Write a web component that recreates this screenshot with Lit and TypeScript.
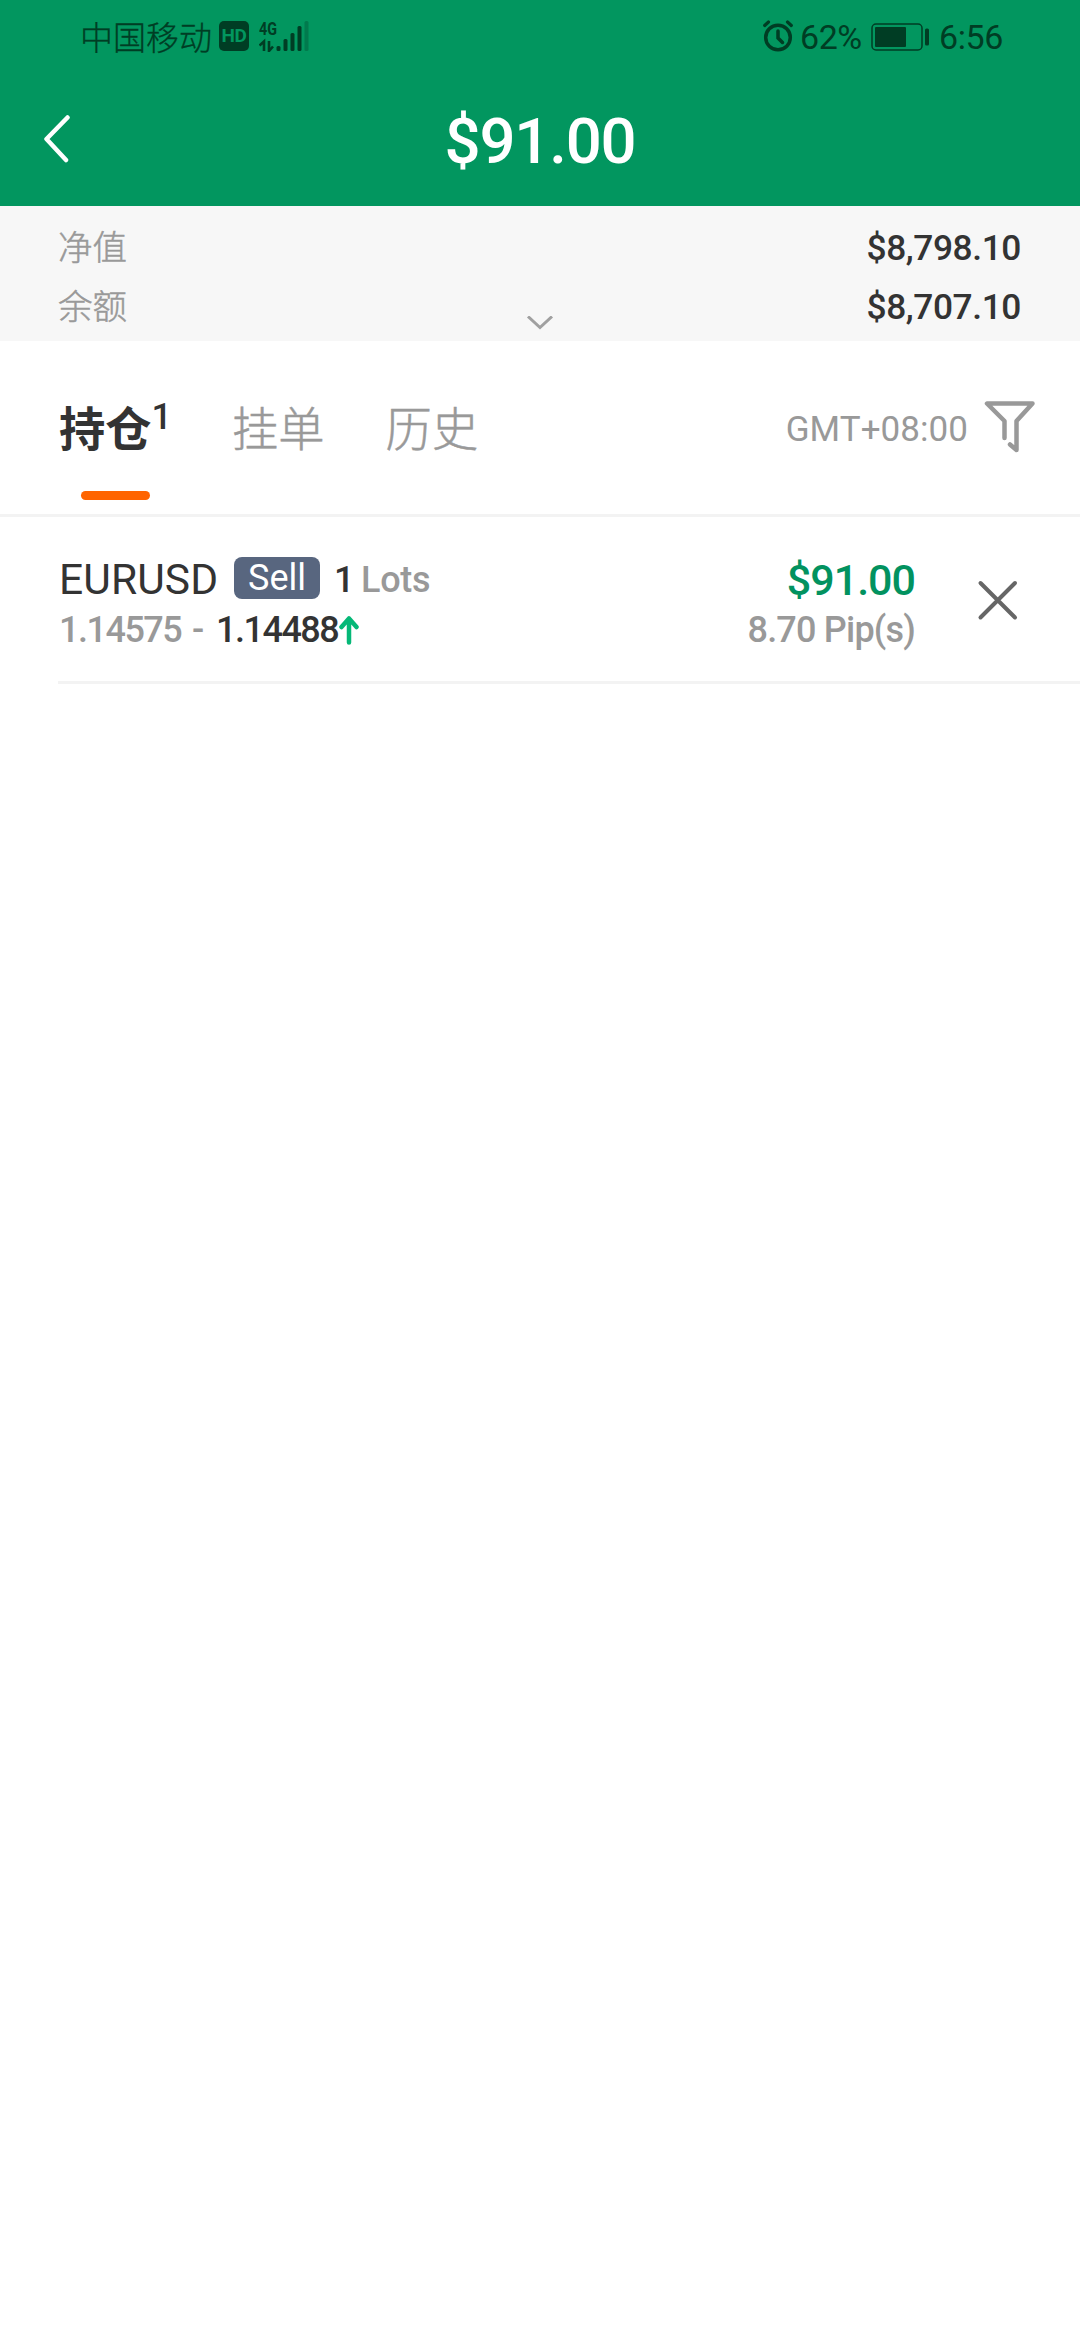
import { LitElement, html, css } from "lit";
import { customElement, property } from "lit/decorators.js";

const fontStack = css`Roboto, "Noto Sans CJK SC", sans-serif`;

@customElement("status-bar")
class StatusBar extends LitElement {
  static styles = css`
    :host { display: flex; align-items: center; justify-content: space-between; height: 70px; box-sizing: border-box;
      padding: 4px 77px 0 80px; color: #003d24; font: 300 33px/50px ${fontStack}; }
    .side { display: flex; align-items: center; height: 50px; }
    .carrier { white-space: nowrap; padding-top: 3px; -webkit-text-stroke: 0.3px #003d24; }
    .hd { display: flex; align-items: center; justify-content: center; width: 30px; height: 30px; margin: 0 10px 3px 7px;
      border-radius: 5px; background: #003d24; color: #02965f; font: 700 19px/30px ${fontStack}; letter-spacing: -0.5px; }
    svg { display: block; flex: none; }
    .signal { margin-bottom: 3px; }
    .g { font: 700 18px ${fontStack}; }
    .alarm { margin: 0 7px 2px 0; }
    .num { font-size: 34px; font-weight: 400; }
    .pct { width: 71px; letter-spacing: -0.5px; }
    .battery { margin-bottom: 1px; }
    .time { margin-left: 9px; letter-spacing: -0.4px; }
  `;
  render() {
    return html`
      <div class="side">
        <span class="carrier">中国移动</span>
        <span class="hd">HD</span>
        <svg class="signal" width="52" height="32" viewBox="0 0 52 32">
          <text class="g" x="0" y="14.500" fill="#003d24" textLength="18" lengthAdjust="spacingAndGlyphs">4G</text>
          <path d="M0.500 25.500 L5 21.500 V31 M10 21 V31 L14 26.500" fill="none" stroke="#003d24" stroke-width="2.600"/>
          <g fill="#003d24">
            <rect x="17.500" y="26" width="4" height="5" rx="1.500"/>
            <rect x="24.500" y="19" width="4" height="12" rx="1.500"/>
            <rect x="31.500" y="13" width="4" height="18" rx="1.500"/>
            <rect x="38.500" y="6" width="4" height="25" rx="1.500"/>
            <rect x="45.500" y="1" width="4" height="30" rx="1.500" opacity="0.300"/>
          </g>
        </svg>
      </div>
      <div class="side">
        <svg class="alarm" width="30" height="32" viewBox="0 0 30 32" fill="none" stroke="#003d24" stroke-linecap="round">
          <circle cx="15" cy="17.500" r="12.300" stroke-width="3.500"/>
          <path d="M15 11 V18 L19.500 22.500" stroke-width="3.500"/>
          <path d="M1.700 5.500 L5.500 2 M28.300 5.500 L24.500 2" stroke-width="3.200"/>
        </svg>
        <span class="num pct">62%</span>
        <svg class="battery" width="59" height="28" viewBox="0 0 59 28">
          <rect x="1" y="1" width="50" height="26" rx="4" fill="none" stroke="#003d24" stroke-width="1.500"/>
          <rect x="4" y="4" width="31" height="20" rx="1" fill="#003d24"/>
          <rect x="54" y="5.500" width="4" height="17" rx="1.500" fill="#003d24"/>
        </svg>
        <span class="num time">6:56</span>
      </div>`;
  }
}

@customElement("account-summary")
class AccountSummary extends LitElement {
  @property({ attribute: false }) rows: { label: string; value: string }[] = [];
  static styles = css`
    :host { display: block; position: relative; box-sizing: border-box; height: 135px; padding: 12.5px 59px 0 58px;
      background: #f7f7f7; font-family: ${fontStack}; }
    .row { display: flex; justify-content: space-between; height: 59px; line-height: 59px; font-size: 34.5px; color: #999; }
    .label { font-weight: 300; -webkit-text-stroke: 0.5px #999; }
    .value { font-size: 35.3px; font-weight: 500; color: #333; letter-spacing: -0.4px; }
    .toggle { position: absolute; left: 526px; top: 110px; display: block; }
  `;
  render() {
    return html`
      ${this.rows.map((r) => html`<div class="row"><span class="label">${r.label}</span><span class="value">${r.value}</span></div>`)}
      <svg class="toggle" width="28" height="14" viewBox="0 0 28 14"><path d="M2 0.500 L14 11.500 L26 0.500" fill="none" stroke="#a0a0a0" stroke-width="3"/></svg>`;
  }
}

@customElement("order-tabs")
class OrderTabs extends LitElement {
  static styles = css`
    :host { display: flex; align-items: center; box-sizing: border-box; height: 176px; padding: 5px 44px 0 59px;
      border-bottom: 3px solid #f3f3f3; font-family: ${fontStack}; color: #999; }
    .tabs { display: flex; flex: 1; gap: 61px; height: 100%; align-items: center; }
    .tab { position: relative; display: flex; height: 100%; align-items: center; white-space: nowrap;
      font-size: 46.3px; line-height: 60px; font-weight: 300; -webkit-text-stroke: 0.5px #999; }
    .active { color: #333; font-weight: 700; width: 112px; -webkit-text-stroke: 0; }
    .count { font-size: 36px; font-weight: 500; line-height: 40px; margin: 0 0 27px 0; }
    .bar { position: absolute; left: 22px; bottom: 14px; width: 69px; height: 9px; border-radius: 5px; background: #ff6400; }
    .zone { font-size: 35px; line-height: 50px; margin-right: 16px; letter-spacing: 0.05px; }
    svg { display: block; margin-bottom: 7px; }
  `;
  render() {
    return html`
      <div class="tabs">
        <div class="tab active"><span>持仓</span><span class="count">1</span><i class="bar"></i></div>
        <div class="tab">挂单</div>
        <div class="tab">历史</div>
      </div>
      <span class="zone">GMT+08:00</span>
      <svg width="52" height="54" viewBox="0 0 52 54" fill="none" stroke="#999" stroke-width="4.500" stroke-linecap="round" stroke-linejoin="round">
        <path d="M20.500 38 V21 L3 3.500 H48.500 L32.500 21 V50 L26 44.500"/>
      </svg>`;
  }
}

@customElement("position-row")
class PositionRow extends LitElement {
  static styles = css`
    :host { display: flex; box-sizing: border-box; height: 167px; margin-left: 58px; padding: 38px 60px 0 1px;
      border-bottom: 3px solid #f3f3f3; font: 400 36px/50px ${fontStack}; color: #999; }
    .main { flex: 1; }
    .line { display: flex; align-items: center; height: 50px; white-space: pre; }
    .symbol { width: 175px; font-size: 42.5px; color: #333; letter-spacing: 0.1px; }
    .side { width: 86px; height: 42px; margin: 0 14px 4px 0; border-radius: 8px; background: #58667f; color: #fff;
      text-align: center; line-height: 43px; font-size: 36px; }
    .qty { width: 27px; color: #333; font-weight: 500; }
    .lots { font-weight: 500; letter-spacing: -0.3px; }
    .price { font-weight: 500; letter-spacing: -1.5px; }
    .open { width: 133px; }
    .dash { width: 24px; }
    .now { color: #333; width: 123px; }
    .result { display: flex; flex-direction: column; align-items: flex-end; font-weight: 500; margin-right: 61px; }
    .profit { font-size: 43px; line-height: 52px; color: #02925f; letter-spacing: -1px; }
    .pips { letter-spacing: -0.8px; }
    svg { display: block; flex: none; }
    .close { margin-top: 23px; }
  `;
  render() {
    return html`
      <div class="main">
        <div class="line"><span class="symbol">EURUSD</span><span class="side">Sell</span><span class="qty">1</span><span class="lots">Lots</span></div>
        <div class="line"><span class="price open">1.14575</span><span class="price dash">-</span><span class="price now">1.14488</span>
          <svg width="20" height="30" viewBox="0 0 20 30" fill="none" stroke="#05b877" stroke-width="4.500" stroke-linecap="round" stroke-linejoin="round"><path d="M10 27.500 V3.500 M2.500 12 L10 3.500 L17.500 12"/></svg></div>
      </div>
      <div class="result"><div class="line profit">$91.00</div><div class="line pips">8.70 Pip(s)</div></div>
      <svg class="close" width="44" height="44" viewBox="0 0 44 44" fill="none" stroke="#666" stroke-width="4" stroke-linecap="round"><path d="M4.500 5 L39 39.500 M39 5 L4.500 39.500"/></svg>`;
  }
}

@customElement("app-root")
class AppRoot extends LitElement {
  static styles = css`
    :host { display: block; width: 1080px; height: 2340px; background: #fff; font-family: ${fontStack}; overflow: hidden; }
    .top { background: #02965f; }
    .nav { display: grid; grid-template-columns: 120px 1fr 120px; align-items: center; height: 136px; }
    .back { display: block; margin-left: 43px; }
    .total { text-align: center; color: #fff; font-weight: 500; font-size: 63.5px; line-height: 74px; letter-spacing: -1.2px; padding-top: 7px; }
  `;
  render() {
    return html`
      <div class="top">
        <status-bar></status-bar>
        <div class="nav">
          <svg class="back" width="30" height="50" viewBox="0 0 30 50" fill="none" stroke="#fff" stroke-width="4.500" stroke-linecap="round" stroke-linejoin="round"><path d="M24.500 4.500 L3.500 26 L23 47"/></svg>
          <div class="total">$91.00</div>
        </div>
      </div>
      <account-summary .rows=${[{ label: "净值", value: "$8,798.10" }, { label: "余额", value: "$8,707.10" }]}></account-summary>
      <order-tabs></order-tabs>
      <position-row></position-row>`;
  }
}
